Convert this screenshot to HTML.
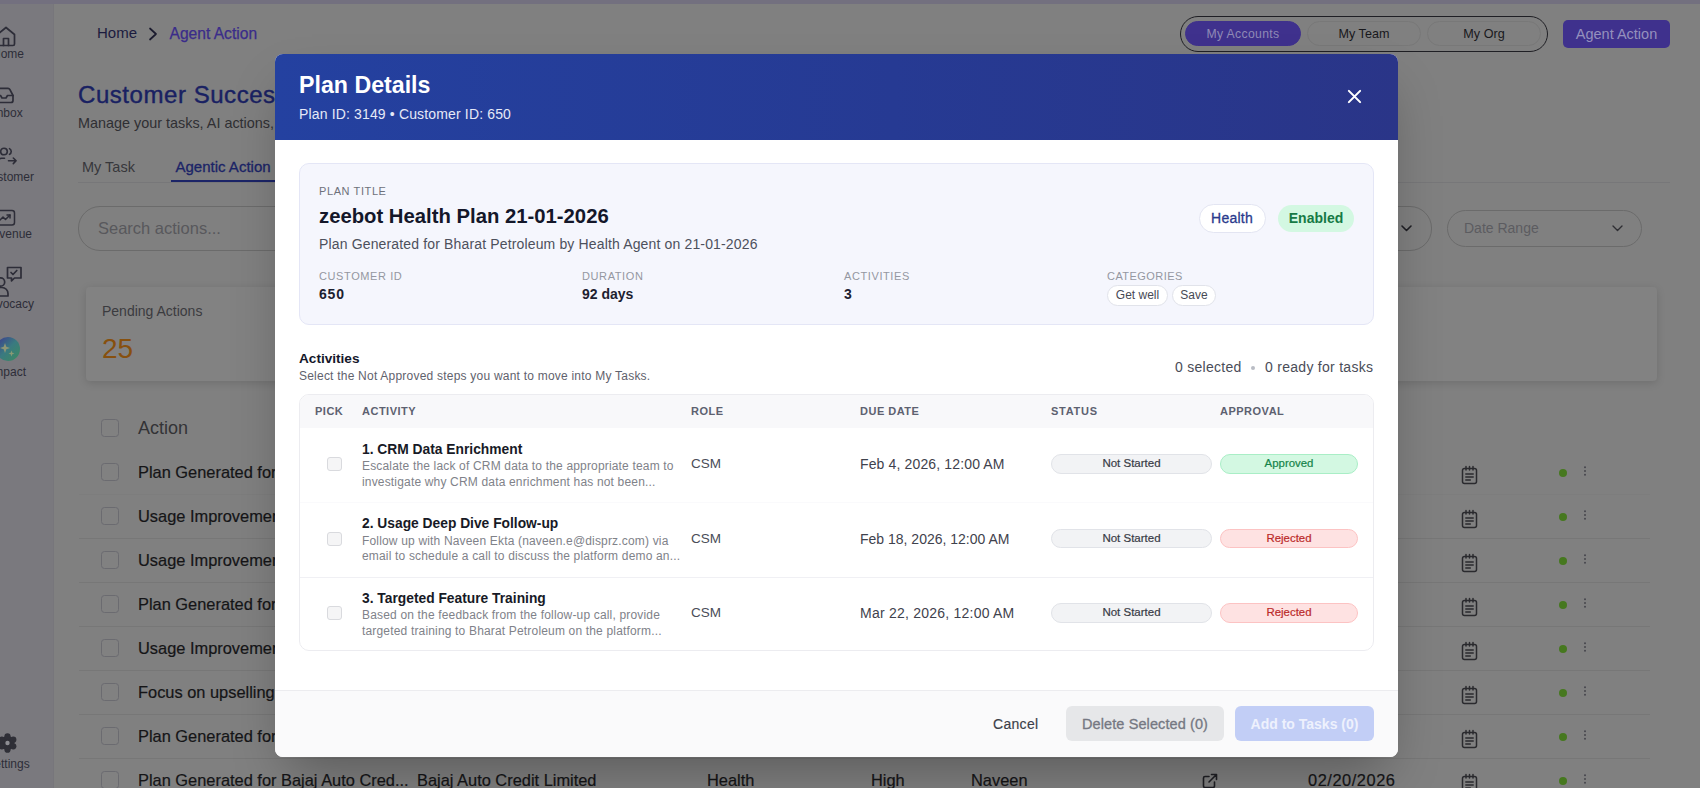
<!DOCTYPE html>
<html>
<head>
<meta charset="utf-8">
<title>Plan Details</title>
<style>
*{box-sizing:border-box;margin:0;padding:0}
html,body{width:1700px;height:788px;overflow:hidden}
body{font-family:"Liberation Sans",sans-serif;background:#808080;position:relative;color:#1c1c1c}
.abs{position:absolute;white-space:nowrap}
/* ---------- dimmed background page ---------- */
#topstrip{left:0;top:0;width:1700px;height:4px;background:#73707f}
#sidebar{left:0;top:4px;width:54px;height:784px;background:#7a797e;border-right:1px solid #77767b}
.sl{font-size:12px;color:#2d2d38;width:80px;text-align:center;left:-32px;line-height:14px}
.bc{font-size:15px;line-height:18px;top:24px}
#tg{left:1180px;top:16px;width:368px;height:36px;border:1.5px solid #1f1f24;border-radius:18px}
.tgb{top:21px;height:25px;border-radius:13px;font-size:12.6px;line-height:25px;text-align:center;border:1px solid #787878;color:#18181c}
#h1{left:78px;top:80px;font-size:24px;line-height:30px;letter-spacing:.55px;color:#192162;-webkit-text-stroke:.4px #192162}
#sub{left:78px;top:115px;font-size:14.4px;line-height:16px;color:#2f2f33}
.tab{font-size:14.5px;line-height:18px;top:158px}
.pill{border:1px solid #6b6b6b;border-radius:22px}
.row{left:138px;font-size:16.4px;line-height:22px;color:#151517;-webkit-text-stroke:.2px #151517}
.cb{left:101px;width:18px;height:18px;border:1px solid #6b6b70;border-radius:3.5px;background:#818181}
.hl{left:79px;width:1571px;height:1px;background:#777}
/* ---------- modal ---------- */
#modal{left:275px;top:54px;width:1123px;height:703px;background:#fff;border-radius:8px;overflow:hidden;box-shadow:0 25px 50px -12px rgba(0,0,0,.30)}
#mh{left:0;top:0;width:1123px;height:86px;background:linear-gradient(90deg,#2441a0 0%,#263a93 55%,#2a3588 100%)}
#mf{left:0;top:636px;width:1123px;height:67px;background:#fafafb;border-top:1px solid #ececef}

/* modal content */
.m{-webkit-text-stroke:.3px currentColor}
#mt{left:24px;top:16px;font-size:23.2px;line-height:30px;font-weight:bold;color:#fff}
#ms{left:24px;top:51px;font-size:14px;line-height:18px;color:#e6e9f7;letter-spacing:.15px}
#info{left:24px;top:109px;width:1075px;height:162px;background:#f5f6fd;border:1px solid #e4e6f6;border-radius:10px}
.lab{font-size:11px;line-height:13px;letter-spacing:.6px;color:#9497a1}
.val{font-size:14px;line-height:17px;font-weight:bold;color:#1d2130}
.chip{height:21px;border:1px solid #e1e3ea;border-radius:11px;background:#fff;font-size:12px;line-height:19px;color:#474a55;text-align:center}
.th{top:351px;font-size:11px;line-height:13px;letter-spacing:.5px;color:#5d6170;font-weight:bold}
.at{left:87px;font-size:13.8px;line-height:17px;font-weight:bold;color:#171a26}
.ad{left:87px;font-size:12px;line-height:15.5px;letter-spacing:.17px;color:#808289}
.role{left:416px;font-size:13.5px;line-height:17px;color:#4a4d58}
.due{left:585px;font-size:14px;line-height:17px;color:#3f424d}
.pk{left:52px;width:14.500px;height:14px;border:1px solid #d9dade;border-radius:3px;background:#f5f5f6}
.st{left:776px;width:161px;height:19.500px;border-radius:10px;background:#f2f3f5;border:1px solid #e1e3e8;font-size:11.5px;line-height:17.500px;text-align:center;color:#383b46;-webkit-text-stroke:.2px #383b46}
.ap{left:945px;width:138px;height:19.500px;border-radius:10px;font-size:11.4px;line-height:17.500px;text-align:center;-webkit-text-stroke:.2px currentColor}
.ok{background:#d3f8e2;border:1px solid #a9eec6;color:#15844a}
.no{background:#fee2e2;border:1px solid #fcc3c3;color:#bb2a2a}
.btn{top:652px;height:35px;border-radius:6px;font-size:14px;line-height:37px;text-align:center}
</style>
</head>
<body>
<!-- BACKGROUND -->
<div id="topstrip" class="abs"></div>
<div id="sidebar" class="abs"></div>
<!-- sidebar icons + labels (cropped at the left edge like the screenshot) -->
<svg class="abs" style="left:-6px;top:24.500px" width="24" height="22" viewBox="0 0 24 22" fill="none" stroke="#2d2d38" stroke-width="1.7" stroke-linecap="round" stroke-linejoin="round"><path d="M3.5 9.5 12 2.5l8.5 7V19a1.5 1.5 0 0 1-1.5 1.5H5A1.5 1.5 0 0 1 3.5 19z"/><path d="M9.5 20.5v-7h5v7"/></svg>
<div class="abs sl" style="top:47px">Home</div>
<svg class="abs" style="left:-8px;top:86px" width="24" height="20" viewBox="0 0 24 20" fill="none" stroke="#2d2d38" stroke-width="1.7" stroke-linecap="round" stroke-linejoin="round"><path d="M3 9.5 6.2 3.4A2 2 0 0 1 8 2.3h8a2 2 0 0 1 1.8 1.1L21 9.5v5a2 2 0 0 1-2 2H5a2 2 0 0 1-2-2z"/><path d="M3 9.500h5.500l1.500 2.500h4l1.500-2.500H21"/></svg>
<div class="abs sl" style="top:106px">Inbox</div>
<svg class="abs" style="left:-7px;top:144.500px" width="26" height="22" viewBox="0 0 26 22" fill="none" stroke="#2d2d38" stroke-width="1.6" stroke-linecap="round" stroke-linejoin="round"><circle cx="11" cy="6.500" r="3.300"/><path d="M16.500 3.600a3.300 3.300 0 0 1 0 5.800"/><path d="M4.500 18.500v-1.200a4 4 0 0 1 4-4h3"/><path d="M15.500 15.800h7.500M20.300 13l2.800 2.800-2.800 2.800"/></svg>
<div class="abs sl" style="top:170px">Customer</div>
<svg class="abs" style="left:-6px;top:209px" width="22" height="18" viewBox="0 0 22 18" fill="none" stroke="#2d2d38" stroke-width="1.5" stroke-linecap="round" stroke-linejoin="round"><rect x="1.500" y="1.500" width="19" height="14.500" rx="2.500"/><path d="M5.500 11.500 9 8l2.500 2.500L16 6"/><path d="M13 6h3v3"/></svg>
<div class="abs sl" style="top:227px">Revenue</div>
<svg class="abs" style="left:-8px;top:265px" width="32" height="32" viewBox="0 0 32 32" fill="none" stroke="#2d2d38" stroke-width="1.7" stroke-linecap="round" stroke-linejoin="round"><path d="M15.500 2.500h13.500v10.500h-6.500l-3 2.800v-2.800h-4z"/><path d="M19 7.500l2 2 3.800-4"/><circle cx="8.500" cy="17" r="4.200"/><path d="M1 31v-2.500a6 6 0 0 1 6-6h3a6 6 0 0 1 6 6V31z"/></svg>
<div class="abs sl" style="top:297px">Advocacy</div>
<svg class="abs" style="left:-4px;top:337px" width="24" height="24" viewBox="0 0 24 24"><defs><linearGradient id="ig" x1="0" y1="0" x2="1" y2="1"><stop offset="0" stop-color="#3d3890"/><stop offset=".5" stop-color="#3a7a80"/><stop offset="1" stop-color="#3d8a5e"/></linearGradient></defs><circle cx="12" cy="12" r="12" fill="url(#ig)"/><path d="M9 6l1.300 3.700L14 11l-3.700 1.300L9 16l-1.300-3.700L4 11l3.700-1.300z" fill="#8f9676"/><path d="M15.500 13.500l.8 2.200 2.200.8-2.200.8-.8 2.200-.8-2.200-2.200-.8 2.200-.8z" fill="#8a9a74"/></svg>
<div class="abs sl" style="top:365px">Impact</div>
<svg class="abs" style="left:-4px;top:732px" width="24" height="22" viewBox="0 0 24 22"><g fill="#2f2f37"><rect x="0" y="5.500" width="9" height="11.500"/><circle cx="11.5" cy="11" r="7"/><circle cx="11.50" cy="4.30" r="3.100"/><circle cx="17.30" cy="7.65" r="3.100"/><circle cx="17.30" cy="14.35" r="3.100"/><circle cx="11.50" cy="17.70" r="3.100"/><circle cx="5.70" cy="14.35" r="3.100"/><circle cx="5.70" cy="7.65" r="3.100"/></g><circle cx="11.5" cy="11" r="2.200" fill="#8d8d93"/></svg>
<div class="abs sl" style="top:757px">Settings</div>

<!-- breadcrumb -->
<div class="abs bc" style="left:97px;color:#1b1b3e">Home</div>
<svg class="abs" style="left:147px;top:27px" width="12" height="14" viewBox="0 0 12 14" fill="none" stroke="#1b1b2e" stroke-width="1.7" stroke-linecap="round" stroke-linejoin="round"><path d="M3 1.500 9 7l-6 5.500"/></svg>
<div class="abs bc" style="left:169.500px;top:24.500px;color:#3a2c8a;font-size:15.600px;-webkit-text-stroke:.25px #3a2c8a">Agent Action</div>

<!-- toggle group + button -->
<div id="tg" class="abs"></div>
<div class="abs tgb" style="left:1185px;width:116px;background:#3f318d;border-color:#3f318d;color:#8f8ab6;font-size:12.200px;letter-spacing:.35px">My Accounts</div>
<div class="abs tgb" style="left:1307px;width:114px">My Team</div>
<div class="abs tgb" style="left:1427px;width:114px">My Org</div>
<div class="abs" style="left:1563px;top:20px;width:107px;height:28px;border-radius:5px;background:#3f318d;color:#9590bd;font-size:14.500px;line-height:28px;text-align:center">Agent Action</div>

<!-- heading -->
<div id="h1" class="abs">Customer Success</div>
<div id="sub" class="abs">Manage your tasks, AI actions, and more</div>
<div class="abs tab" style="left:82px;color:#37373b">My Task</div>
<div class="abs tab m" style="left:175.500px;color:#1b2467;font-size:15px">Agentic Action</div>
<div class="abs" style="left:78px;top:182px;width:1592px;height:1px;background:#777779"></div>
<div class="abs" style="left:171px;top:180px;width:110px;height:2px;background:#1b2467"></div>

<!-- search + filters -->
<div class="abs pill" style="left:78px;top:206px;width:400px;height:45px"></div>
<div class="abs" style="left:98px;top:218px;font-size:16.500px;line-height:20px;color:#58585c">Search actions...</div>
<div class="abs pill" style="left:1238px;top:206px;width:194px;height:45px"></div>
<svg class="abs" style="left:1400px;top:224px" width="13" height="9" viewBox="0 0 13 9" fill="none" stroke="#1f1f24" stroke-width="1.600" stroke-linecap="round" stroke-linejoin="round"><path d="M2 2l4.500 4.500L11 2"/></svg>
<div class="abs pill" style="left:1447px;top:210px;width:195px;height:37px"></div>
<div class="abs" style="left:1464px;top:220px;font-size:14px;line-height:17px;color:#5c5c60">Date Range</div>
<svg class="abs" style="left:1611px;top:224px" width="13" height="9" viewBox="0 0 13 9" fill="none" stroke="#2e2e33" stroke-width="1.350" stroke-linecap="round" stroke-linejoin="round"><path d="M2 2l4.500 4.500L11 2"/></svg>

<!-- stats card -->
<div class="abs" style="left:86px;top:287px;width:1571px;height:94px;background:#828282;border-radius:4px;box-shadow:0 2px 8px rgba(0,0,0,.14)"></div>
<div class="abs" style="left:102px;top:303px;font-size:14px;line-height:16px;color:#3b3b3f">Pending Actions</div>
<div class="abs" style="left:102px;top:333px;font-size:28px;line-height:32px;color:#87500e">25</div>

<!-- table -->
<div class="abs cb" style="top:419px"></div>
<div class="abs" style="left:138px;top:417px;font-size:18px;line-height:22px;color:#333336">Action</div>
<div class="abs cb" style="top:463px"></div>
<div class="abs row" style="top:461px">Plan Generated for Bajaj</div>
<div class="abs hl" style="top:494px;background:#7d7d7d"></div>
<svg class="abs" style="left:1461px;top:465px" width="17" height="20" viewBox="0 0 17 20" fill="none" stroke="#2a2a2e" stroke-width="1.500" stroke-linecap="round" stroke-linejoin="round"><rect x="1.500" y="3.500" width="14" height="15" rx="2"/><path d="M5 1.500v3.500M8.500 1.500v3.500M12 1.500v3.500M4.800 9h7.400M4.800 12h7.400M4.800 15h4.500"/></svg>
<div class="abs" style="left:1558.500px;top:469px;width:8px;height:8px;border-radius:4px;background:#46781f"></div>
<svg class="abs" style="left:1583px;top:466px" width="4" height="10" viewBox="0 0 4 10" fill="#47474d"><circle cx="2" cy="1.200" r="1"/><circle cx="2" cy="5" r="1"/><circle cx="2" cy="8.800" r="1"/></svg>
<div class="abs cb" style="top:507px"></div>
<div class="abs row" style="top:505px">Usage Improvement Plan</div>
<div class="abs hl" style="top:538px"></div>
<svg class="abs" style="left:1461px;top:509px" width="17" height="20" viewBox="0 0 17 20" fill="none" stroke="#2a2a2e" stroke-width="1.500" stroke-linecap="round" stroke-linejoin="round"><rect x="1.500" y="3.500" width="14" height="15" rx="2"/><path d="M5 1.500v3.500M8.500 1.500v3.500M12 1.500v3.500M4.800 9h7.400M4.800 12h7.400M4.800 15h4.500"/></svg>
<div class="abs" style="left:1558.500px;top:513px;width:8px;height:8px;border-radius:4px;background:#46781f"></div>
<svg class="abs" style="left:1583px;top:510px" width="4" height="10" viewBox="0 0 4 10" fill="#47474d"><circle cx="2" cy="1.200" r="1"/><circle cx="2" cy="5" r="1"/><circle cx="2" cy="8.800" r="1"/></svg>
<div class="abs cb" style="top:551px"></div>
<div class="abs row" style="top:549px">Usage Improvement Plan</div>
<div class="abs hl" style="top:582px"></div>
<svg class="abs" style="left:1461px;top:553px" width="17" height="20" viewBox="0 0 17 20" fill="none" stroke="#2a2a2e" stroke-width="1.500" stroke-linecap="round" stroke-linejoin="round"><rect x="1.500" y="3.500" width="14" height="15" rx="2"/><path d="M5 1.500v3.500M8.500 1.500v3.500M12 1.500v3.500M4.800 9h7.400M4.800 12h7.400M4.800 15h4.500"/></svg>
<div class="abs" style="left:1558.500px;top:557px;width:8px;height:8px;border-radius:4px;background:#46781f"></div>
<svg class="abs" style="left:1583px;top:554px" width="4" height="10" viewBox="0 0 4 10" fill="#47474d"><circle cx="2" cy="1.200" r="1"/><circle cx="2" cy="5" r="1"/><circle cx="2" cy="8.800" r="1"/></svg>
<div class="abs cb" style="top:595px"></div>
<div class="abs row" style="top:593px">Plan Generated for Bajaj</div>
<div class="abs hl" style="top:626px"></div>
<svg class="abs" style="left:1461px;top:597px" width="17" height="20" viewBox="0 0 17 20" fill="none" stroke="#2a2a2e" stroke-width="1.500" stroke-linecap="round" stroke-linejoin="round"><rect x="1.500" y="3.500" width="14" height="15" rx="2"/><path d="M5 1.500v3.500M8.500 1.500v3.500M12 1.500v3.500M4.800 9h7.400M4.800 12h7.400M4.800 15h4.500"/></svg>
<div class="abs" style="left:1558.500px;top:601px;width:8px;height:8px;border-radius:4px;background:#46781f"></div>
<svg class="abs" style="left:1583px;top:598px" width="4" height="10" viewBox="0 0 4 10" fill="#47474d"><circle cx="2" cy="1.200" r="1"/><circle cx="2" cy="5" r="1"/><circle cx="2" cy="8.800" r="1"/></svg>
<div class="abs cb" style="top:639px"></div>
<div class="abs row" style="top:637px">Usage Improvement Plan</div>
<div class="abs hl" style="top:670px"></div>
<svg class="abs" style="left:1461px;top:641px" width="17" height="20" viewBox="0 0 17 20" fill="none" stroke="#2a2a2e" stroke-width="1.500" stroke-linecap="round" stroke-linejoin="round"><rect x="1.500" y="3.500" width="14" height="15" rx="2"/><path d="M5 1.500v3.500M8.500 1.500v3.500M12 1.500v3.500M4.800 9h7.400M4.800 12h7.400M4.800 15h4.500"/></svg>
<div class="abs" style="left:1558.500px;top:645px;width:8px;height:8px;border-radius:4px;background:#46781f"></div>
<svg class="abs" style="left:1583px;top:642px" width="4" height="10" viewBox="0 0 4 10" fill="#47474d"><circle cx="2" cy="1.200" r="1"/><circle cx="2" cy="5" r="1"/><circle cx="2" cy="8.800" r="1"/></svg>
<div class="abs cb" style="top:683px"></div>
<div class="abs row" style="top:681px">Focus on upselling</div>
<div class="abs hl" style="top:714px"></div>
<svg class="abs" style="left:1461px;top:685px" width="17" height="20" viewBox="0 0 17 20" fill="none" stroke="#2a2a2e" stroke-width="1.500" stroke-linecap="round" stroke-linejoin="round"><rect x="1.500" y="3.500" width="14" height="15" rx="2"/><path d="M5 1.500v3.500M8.500 1.500v3.500M12 1.500v3.500M4.800 9h7.400M4.800 12h7.400M4.800 15h4.500"/></svg>
<div class="abs" style="left:1558.500px;top:689px;width:8px;height:8px;border-radius:4px;background:#46781f"></div>
<svg class="abs" style="left:1583px;top:686px" width="4" height="10" viewBox="0 0 4 10" fill="#47474d"><circle cx="2" cy="1.200" r="1"/><circle cx="2" cy="5" r="1"/><circle cx="2" cy="8.800" r="1"/></svg>
<div class="abs cb" style="top:727px"></div>
<div class="abs row" style="top:725px">Plan Generated for Bajaj</div>
<div class="abs hl" style="top:758px"></div>
<svg class="abs" style="left:1461px;top:729px" width="17" height="20" viewBox="0 0 17 20" fill="none" stroke="#2a2a2e" stroke-width="1.500" stroke-linecap="round" stroke-linejoin="round"><rect x="1.500" y="3.500" width="14" height="15" rx="2"/><path d="M5 1.500v3.500M8.500 1.500v3.500M12 1.500v3.500M4.800 9h7.400M4.800 12h7.400M4.800 15h4.500"/></svg>
<div class="abs" style="left:1558.500px;top:733px;width:8px;height:8px;border-radius:4px;background:#46781f"></div>
<svg class="abs" style="left:1583px;top:730px" width="4" height="10" viewBox="0 0 4 10" fill="#47474d"><circle cx="2" cy="1.200" r="1"/><circle cx="2" cy="5" r="1"/><circle cx="2" cy="8.800" r="1"/></svg>
<div class="abs cb" style="top:771px"></div>
<div class="abs row" style="top:769px">Plan Generated for Bajaj Auto Cred...</div>
<svg class="abs" style="left:1461px;top:773px" width="17" height="20" viewBox="0 0 17 20" fill="none" stroke="#2a2a2e" stroke-width="1.500" stroke-linecap="round" stroke-linejoin="round"><rect x="1.500" y="3.500" width="14" height="15" rx="2"/><path d="M5 1.500v3.500M8.500 1.500v3.500M12 1.500v3.500M4.800 9h7.400M4.800 12h7.400M4.800 15h4.500"/></svg>
<div class="abs" style="left:1558.500px;top:777px;width:8px;height:8px;border-radius:4px;background:#46781f"></div>
<svg class="abs" style="left:1583px;top:774px" width="4" height="10" viewBox="0 0 4 10" fill="#47474d"><circle cx="2" cy="1.200" r="1"/><circle cx="2" cy="5" r="1"/><circle cx="2" cy="8.800" r="1"/></svg>
<div class="abs row" style="left:417px;top:769px">Bajaj Auto Credit Limited</div>
<div class="abs row" style="left:707px;top:769px">Health</div>
<div class="abs row" style="left:871px;top:769px">High</div>
<div class="abs row" style="left:971px;top:769px">Naveen</div>
<div class="abs row" style="left:1308px;top:769px;letter-spacing:.55px">02/20/2026</div>
<svg class="abs" style="left:1202px;top:773px" width="16" height="16" viewBox="0 0 16 16" fill="none" stroke="#1f1f24" stroke-width="1.600" stroke-linecap="round" stroke-linejoin="round"><path d="M12.500 9v4a1.500 1.500 0 0 1-1.500 1.500H3A1.500 1.500 0 0 1 1.500 13V5A1.500 1.500 0 0 1 3 3.500h4"/><path d="M9.500 1.500h5v5M14.200 1.800 7 9"/></svg>


<!-- MODAL -->
<div id="modal" class="abs">
  <div id="mh" class="abs"></div>
  <div id="mt" class="abs">Plan Details</div>
  <div id="ms" class="abs">Plan ID: 3149 &bull; Customer ID: 650</div>
  <svg class="abs" style="left:1072px;top:35px" width="15" height="15" viewBox="0 0 16 16" fill="none" stroke="#fff" stroke-width="2.2" stroke-linecap="round"><path d="M2 2l12 12M14 2 2 14"/></svg>

  <div id="info" class="abs"></div>
  <div class="abs lab" style="left:44px;top:130.500px;color:#6e717b">PLAN TITLE</div>
  <div class="abs" style="left:44px;top:149px;font-size:20.3px;line-height:26px;font-weight:bold;color:#14172a">zeebot Health Plan 21-01-2026</div>
  <div class="abs" style="left:44px;top:181.500px;font-size:14px;line-height:17px;color:#4d505c;letter-spacing:.15px">Plan Generated for Bharat Petroleum by Health Agent on 21-01-2026</div>
  <div class="abs m" style="left:923.500px;top:149.500px;width:67px;height:29px;border:1px solid #e3e5f2;border-radius:15px;background:#fff;color:#2a3a8c;font-size:14px;line-height:27px;letter-spacing:.25px;text-align:center">Health</div>
  <div class="abs" style="left:1003px;top:150.500px;width:76px;height:27.500px;border-radius:14px;background:#d3f8e2;color:#167a45;font-size:14px;line-height:27px;text-align:center;font-weight:bold">Enabled</div>
  <div class="abs lab" style="left:44px;top:216px">CUSTOMER ID</div>
  <div class="abs val" style="left:44px;top:232px;letter-spacing:.8px">650</div>
  <div class="abs lab" style="left:307px;top:216px">DURATION</div>
  <div class="abs val" style="left:307px;top:232px">92 days</div>
  <div class="abs lab" style="left:569px;top:216px">ACTIVITIES</div>
  <div class="abs val" style="left:569px;top:232px">3</div>
  <div class="abs lab" style="left:832px;top:216px;letter-spacing:.45px">CATEGORIES</div>
  <div class="abs chip" style="left:832px;top:230.500px;width:61px">Get well</div>
  <div class="abs chip" style="left:897px;top:230.500px;width:44px">Save</div>

  <div class="abs" style="left:24px;top:296px;font-size:13.6px;line-height:17px;font-weight:bold;color:#14172a">Activities</div>
  <div class="abs" style="left:24px;top:315px;font-size:12px;line-height:14px;letter-spacing:.22px;color:#5f626d">Select the Not Approved steps you want to move into My Tasks.</div>
  <div class="abs" style="left:900px;top:305px;font-size:14px;line-height:17px;color:#4a4d58;letter-spacing:.28px">0 selected</div>
  <div class="abs" style="left:976px;top:312px;width:4px;height:4px;border-radius:2px;background:#b9bcc4"></div>
  <div class="abs" style="left:990px;top:305px;font-size:14px;line-height:17px;color:#4a4d58;letter-spacing:.28px">0 ready for tasks</div>

  <!-- activities table -->
  <div class="abs" style="left:24px;top:340px;width:1075px;height:257px;border:1px solid #ececf0;border-radius:10px;overflow:hidden;background:#fff">
    <div class="abs" style="left:0;top:0;width:1075px;height:33px;background:#f8f8fa"></div>
    <div class="abs" style="left:0;top:107px;width:1075px;height:1px;background:#fafafc"></div>
    <div class="abs" style="left:0;top:182px;width:1075px;height:1px;background:#f0f0f4"></div>
  </div>
  <div class="abs th" style="left:40px">PICK</div>
  <div class="abs th" style="left:87px">ACTIVITY</div>
  <div class="abs th" style="left:416px">ROLE</div>
  <div class="abs th" style="left:585px">DUE DATE</div>
  <div class="abs th" style="left:776px;letter-spacing:.75px">STATUS</div>
  <div class="abs th" style="left:945px">APPROVAL</div>
  <div class="abs pk" style="top:403px"></div>
  <div class="abs at" style="top:386.7px">1. CRM Data Enrichment</div>
  <div class="abs ad" style="top:405px">Escalate the lack of CRM data to the appropriate team to<br>investigate why CRM data enrichment has not been...</div>
  <div class="abs role" style="top:401px">CSM</div>
  <div class="abs due" style="top:402px;letter-spacing:.14px">Feb 4, 2026, 12:00 AM</div>
  <div class="abs st" style="top:400px">Not Started</div>
  <div class="abs ap ok" style="top:400px">Approved</div>
  <div class="abs pk" style="top:477.7px"></div>
  <div class="abs at" style="top:461.4px">2. Usage Deep Dive Follow-up</div>
  <div class="abs ad" style="top:479.7px">Follow up with Naveen Ekta (naveen.e@disprz.com) via<br>email to schedule a call to discuss the platform demo an...</div>
  <div class="abs role" style="top:475.7px">CSM</div>
  <div class="abs due" style="top:476.7px">Feb 18, 2026, 12:00 AM</div>
  <div class="abs st" style="top:474.7px">Not Started</div>
  <div class="abs ap no" style="top:474.7px">Rejected</div>
  <div class="abs pk" style="top:552.35px"></div>
  <div class="abs at" style="top:536.05px">3. Targeted Feature Training</div>
  <div class="abs ad" style="top:554.35px">Based on the feedback from the follow-up call, provide<br>targeted training to Bharat Petroleum on the platform...</div>
  <div class="abs role" style="top:550.35px">CSM</div>
  <div class="abs due" style="top:551.35px;letter-spacing:.23px">Mar 22, 2026, 12:00 AM</div>
  <div class="abs st" style="top:549.35px">Not Started</div>
  <div class="abs ap no" style="top:549.35px">Rejected</div>
  <div id="mf" class="abs"></div>
  <div class="abs m" style="left:718px;top:662px;font-size:14px;line-height:17px;letter-spacing:.3px;color:#3c3f49;-webkit-text-stroke:.15px #3c3f49">Cancel</div>
  <div class="abs btn m" style="left:791px;width:158px;background:#e6e7e9;color:#757882;font-size:14.5px;letter-spacing:.1px">Delete Selected (0)</div>
  <div class="abs btn" style="left:960px;width:139px;background:#c2cef6;color:#eef1fd;font-weight:bold">Add to Tasks (0)</div>
</div>
</body>
</html>
